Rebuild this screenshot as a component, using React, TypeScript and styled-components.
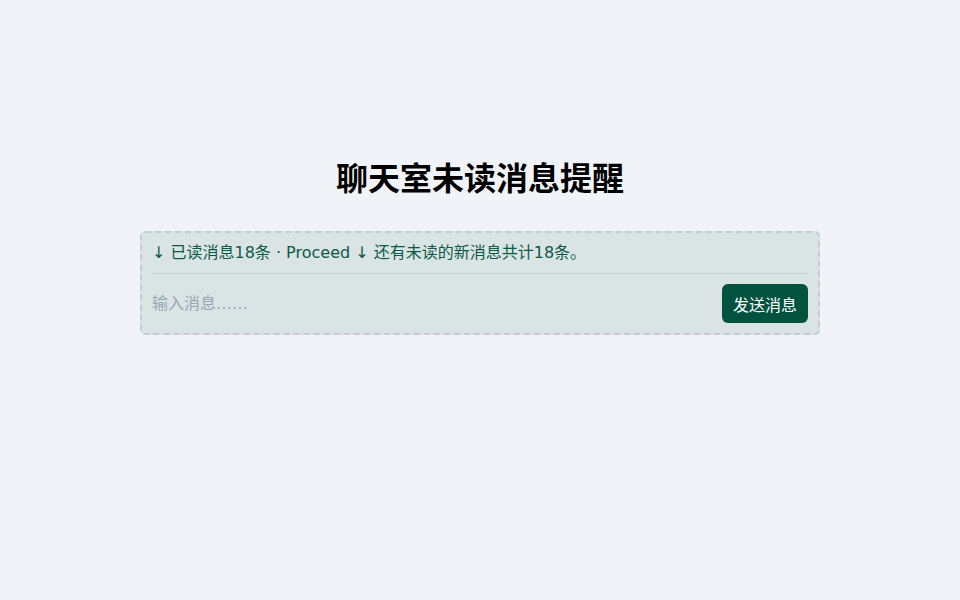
import React, { useState } from 'react';
import { styled, createGlobalStyle } from 'styled-components';

const GlobalStyle = createGlobalStyle`
  html, body {
    margin: 0;
    padding: 0;
    background: #f0f4f8;
    font-family: 'DejaVu Sans', 'Noto Sans CJK SC', sans-serif;
  }
`;

const App = () => {
  const [message, setMessage] = useState('');
  const unread = 18;

  return (
    <>
      <GlobalStyle />
      <PageWrapper>
        <Title>聊天室未读消息提醒</Title>
        <NoticeCard>
          <NoticeHeader>
            ↓ 已读消息{unread}条 · Proceed ↓ 还有未读的新消息共计{unread}条。
          </NoticeHeader>
          <InputRow>
            <input
              type="text"
              placeholder="输入消息……"
              value={message}
              onChange={(e) => setMessage(e.target.value)}
            />
            <SendButton type="button">发送消息</SendButton>
          </InputRow>
        </NoticeCard>
      </PageWrapper>
    </>
  );
};

const PageWrapper = styled.div`
  min-height: 100vh;
  box-sizing: border-box;
  padding-top: 159px;
  display: flex;
  flex-direction: column;
  align-items: center;
`;

const Title = styled.h1`
  margin: 0 0 32px;
  font-size: 32px;
  line-height: 40px;
  font-weight: 700;
  color: #000;
`;

const NoticeCard = styled.div`
  width: 680px;
  box-sizing: border-box;
  padding: 9px 10px 10px;
  border: 2px dashed #c3cdcf;
  border-radius: 5px;
  background-color: #dae4e4;
  display: flex;
  flex-direction: column;
`;

const NoticeHeader = styled.div`
  padding-bottom: 9px;
  border-bottom: 1px solid #c5d2d2;
  color: #0b5a47;
  font-size: 16px;
  line-height: 22px;
  white-space: nowrap;
`;

const InputRow = styled.div`
  margin-top: 10px;
  display: flex;
  flex-direction: row;
  align-items: center;
  gap: 12px;

  input {
    flex: 1;
    min-width: 0;
    padding: 0;
    border: none;
    outline: none;
    background: transparent;
    font-family: inherit;
    font-size: 16px;
    color: #1f2d2a;

    &::placeholder {
      color: #9aa6b2;
    }
  }
`;

const SendButton = styled.button`
  width: 86px;
  height: 39px;
  border: none;
  border-radius: 6px;
  background-color: #02523f;
  color: #ffffff;
  font-family: inherit;
  font-size: 16px;
  cursor: pointer;
`;

export default App;
